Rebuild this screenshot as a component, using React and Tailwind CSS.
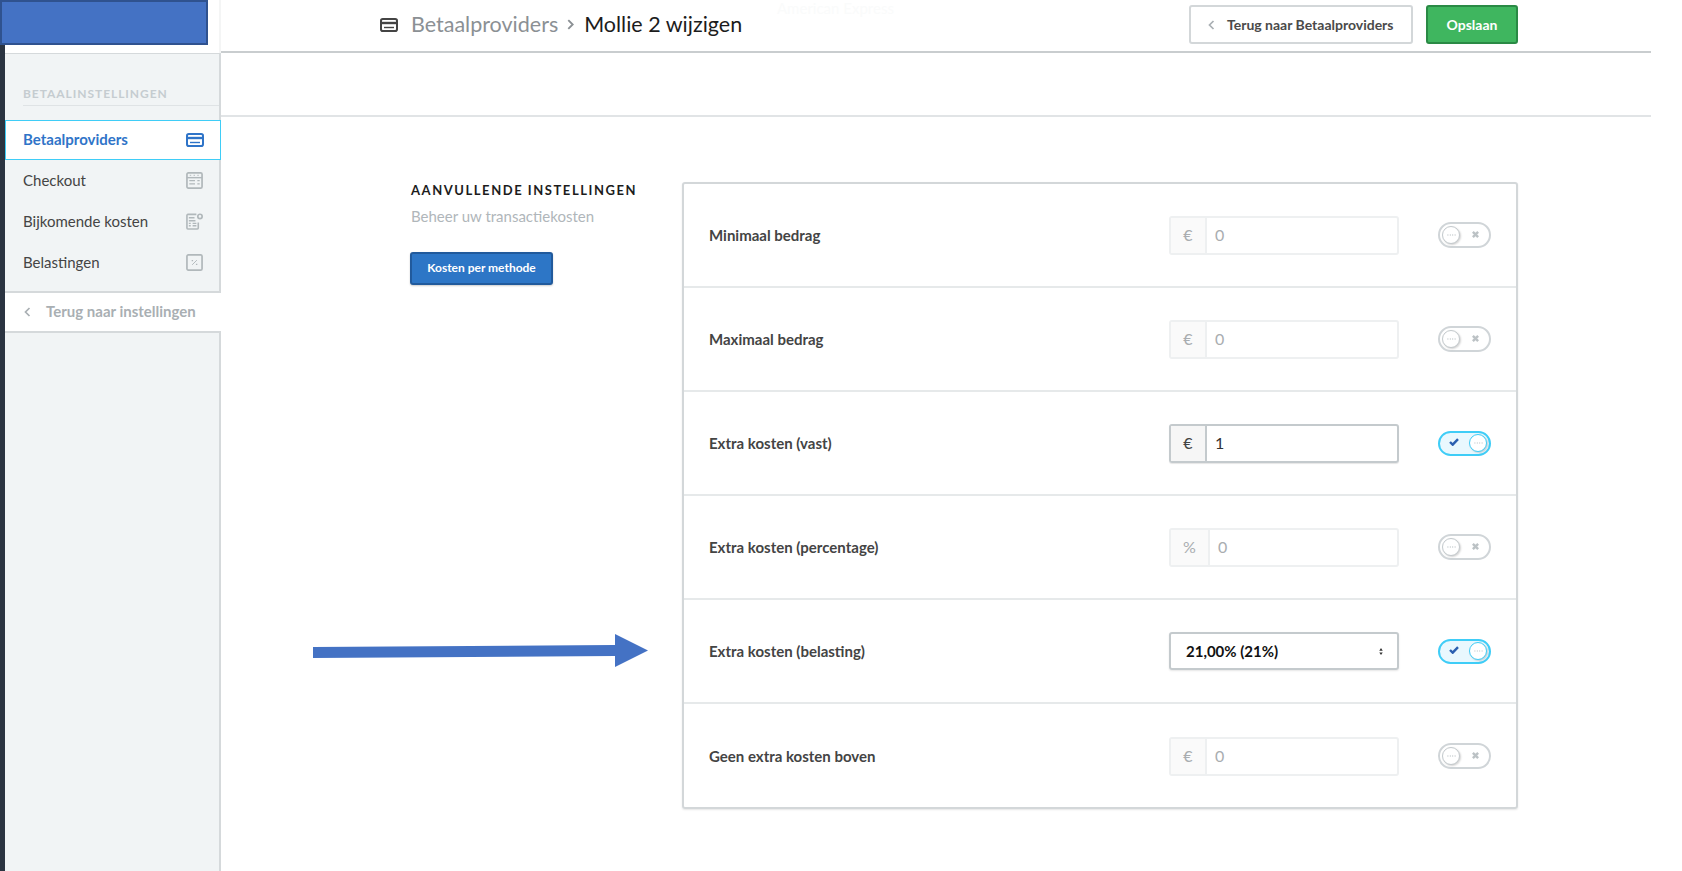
import React from "react";

const CardIcon = ({ className }) => (
  <svg viewBox="0 0 18 14" className={className} fill="none" stroke="currentColor">
    <rect x="1" y="1" width="16" height="12" rx="1.8" strokeWidth="2" />
    <path d="M1 5h16" strokeWidth="2.4" />
    <path d="M4 9.5h10" strokeWidth="1.4" />
  </svg>
);

const CheckoutIcon = () => (
  <svg viewBox="0 0 18 18" className="h-[17px] w-[17px] text-[#b1b8bb]" fill="none" stroke="currentColor">
    <rect x="1" y="1" width="16" height="16" rx="1.5" strokeWidth="1.8" />
    <path d="M1 6h16" strokeWidth="1.5" />
    <path d="M4 3.5h1.5M8 3.5h1.5M12 3.5h1.5" strokeWidth="1" />
    <path d="M3.5 9.2h6M3.5 12.5h6M12 9.2h2.5M12 12.5h2.5" strokeWidth="1.4" />
  </svg>
);

const CostsIcon = () => (
  <svg viewBox="0 0 18 18" className="h-[17px] w-[17px] text-[#b1b8bb]" fill="none" stroke="currentColor">
    <path d="M11 1.5H2a1 1 0 0 0-1 1V16a1 1 0 0 0 1 1h10a1 1 0 0 0 1-1v-6" strokeWidth="1.7" />
    <circle cx="14.8" cy="3.6" r="2.3" strokeWidth="1.8" />
    <path d="M3 5h6M3 8.2h7M3 11h2M3 13.5h2M7 11h4M7 13.5h4" strokeWidth="1.4" />
  </svg>
);

const PercentIcon = () => (
  <svg viewBox="0 0 18 18" className="h-[17px] w-[17px] text-[#b1b8bb]" fill="none" stroke="currentColor">
    <rect x="1" y="1" width="16" height="16" rx="1.5" strokeWidth="1.8" />
    <path d="M6.5 11.5l5-5" strokeWidth="1" />
    <path d="M6 7h1.5M10.5 11h1.5" strokeWidth="1.4" />
  </svg>
);

const Chevron = ({ className, d = "M5 1L1 5l4 4" }) => (
  <svg viewBox="0 0 6 10" className={className} fill="none" stroke="currentColor" strokeWidth="1.7">
    <path d={d} />
  </svg>
);

const Knob = ({ on }) => (
  <span
    className={
      "flex h-[18px] w-[18px] shrink-0 items-center justify-center rounded-full border bg-white shadow-[1px_1px_2px_rgba(0,0,0,0.18)] " +
      (on ? "border-[#3fcdf7] text-[#c9ced1]" : "border-[#c3c9cc] text-[#c3c9cc]")
    }
  >
    <svg viewBox="0 0 10 2" className="h-[2px] w-[9px]" fill="currentColor">
      <circle cx="1" cy="1" r="0.7" />
      <circle cx="3.7" cy="1" r="0.7" />
      <circle cx="6.3" cy="1" r="0.7" />
      <circle cx="9" cy="1" r="0.7" />
    </svg>
  </span>
);

const Toggle = ({ on }) =>
  on ? (
    <div className="flex h-[25px] w-[53px] items-center justify-between rounded-full border-2 border-[#3fcdf7] bg-[#e9f8fe] pl-[9px] pr-[2px]">
      <svg viewBox="0 0 10 8" className="mb-[2px] h-[8px] w-[10px] text-[#2b5fb0]" fill="none" stroke="currentColor" strokeWidth="2.4">
        <path d="M1 4l2.7 2.7L9 1.2" />
      </svg>
      <Knob on />
    </div>
  ) : (
    <div className="flex h-[26px] w-[53px] items-center justify-between rounded-full border-2 border-[#d0d5d8] bg-white pl-[2px] pr-[10px]">
      <Knob />
      <svg viewBox="0 0 8 8" className="mb-[1px] h-[7px] w-[7px] text-[#bcc2c5]" fill="none" stroke="currentColor" strokeWidth="2.8">
        <path d="M1 1l6 6M7 1L1 7" />
      </svg>
    </div>
  );

const Field = ({ addon, addonW, value, on }) => (
  <div
    className={
      "flex h-[39px] w-[230px] overflow-hidden rounded-[3px] border-2 " +
      (on ? "border-[#c4cacd] shadow-[0_1px_1px_rgba(0,0,0,0.1)]" : "border-[#eef0f1]")
    }
  >
    <div
      className={
        "flex shrink-0 items-center justify-center border-r-2 text-[16px] " +
        addonW +
        (on ? " border-[#c4cacd] bg-[#f6f6f6] text-[#444]" : " border-[#eef0f1] bg-[#fafafa] text-[#a9adb0]")
      }
    >
      {addon}
    </div>
    <div className={"flex flex-1 items-center pl-[8px] text-[16px] " + (on ? "text-[#333]" : "text-[#a9adb0]")}>{value}</div>
  </div>
);

const Select = () => (
  <div className="flex h-[38px] w-[230px] items-center justify-between rounded-[3px] border-2 border-[#c4cacd] pl-[15px] pr-[14px] text-[15px] font-bold text-[#111] shadow-[0_1px_2px_rgba(0,0,0,0.1)]">
    <span>21,00% (21%)</span>
    <svg viewBox="0 0 4 8" className="h-[7px] w-[4px] text-[#333]" fill="currentColor">
      <path d="M2 0l2 3H0zM2 8L0 5h4z" />
    </svg>
  </div>
);

const Row = ({ label, children, on, last }) => (
  <div className={"flex h-[104px] items-center pl-[25px] pr-[25px] " + (last ? "" : "border-b-2 border-[#e6e9ea]")}>
    <div className="flex-1 pt-[1px] text-[15px] font-bold text-[#444]">{label}</div>
    {children}
    <div className="ml-[39px]">
      <Toggle on={on} />
    </div>
  </div>
);

const NavItem = ({ label, icon }) => (
  <div className="flex h-[41px] items-center justify-between pl-[18px] pr-[16px] text-[15px] text-[#444]">
    <span>{label}</span>
    {icon}
  </div>
);

export default function App() {
  return (
    <div className="relative flex h-[871px] w-[1682px] overflow-hidden bg-white font-['Lato','Liberation_Sans',sans-serif]">
      {/* annotation: blue box over the logo */}
      <div className="absolute left-0 top-0 h-[45px] w-[208px] border-2 border-[#2f528f] bg-[#4472c4]" />
      {/* annotation: arrow */}
      <svg viewBox="0 0 335 33" className="absolute left-[313px] top-[634px] h-[33px] w-[335px]">
        <path d="M0 13L302 11V0L335 16.5 302 33V22L0 24Z" fill="#4472c4" />
      </svg>
      {/* faint text bleeding through the screenshot */}
      <div className="absolute left-[777px] top-[-3px] text-[15px] text-[#fafbfb]">American Express</div>

      <div className="w-[5px] shrink-0 bg-[#2b3441]" />

      <aside className="flex w-[216px] shrink-0 flex-col">
        <div className="h-[53px] shrink-0 border-r-2 border-[#f4f5f5] bg-white" />
        <div className="h-[240px] shrink-0 border-r-2 border-b-2 border-t border-[#d5d9db] bg-[#f1f4f5]">
          <div className="ml-[18px] mt-[30px] flex h-[22px] items-center border-b border-[#dfe3e5] pb-[2px] text-[12px] font-bold tracking-[0.95px] text-[#c5ccd0]">
            BETAALINSTELLINGEN
          </div>
          <div className="mr-[-2px] mt-[14px] flex h-[40px] items-center justify-between border border-[#3fcdf7] bg-white pb-[1px] pl-[17px] pr-[16px] text-[15px] font-bold text-[#2f74c8]">
            <span>Betaalproviders</span>
            <CardIcon className="h-[14px] w-[18px] text-[#2f74c8]" />
          </div>
          <NavItem label="Checkout" icon={<CheckoutIcon />} />
          <NavItem label="Bijkomende kosten" icon={<CostsIcon />} />
          <NavItem label="Belastingen" icon={<PercentIcon />} />
        </div>
        <div className="flex h-[38px] shrink-0 items-center bg-white pb-[1px] pl-[19px] text-[15px] font-bold text-[#a9afb3]">
          <Chevron className="mr-[15px] h-[10px] w-[7px]" />
          Terug naar instellingen
        </div>
        <div className="flex-1 border-r-2 border-t-2 border-[#d5d9db] bg-[#f1f4f5]" />
      </aside>

      <main className="flex w-[1430px] shrink-0 flex-col">
        <header className="flex h-[53px] shrink-0 items-center border-b-2 border-[#c9cdcf] pb-[2px] pl-[159px] pr-[133px]">
          <CardIcon className="h-[14px] w-[18px] text-[#444]" />
          <span className="ml-[13px] text-[21.5px] text-[#8b9094]">Betaalproviders</span>
          <Chevron className="ml-[9px] h-[11px] w-[7px] text-[#8b9094]" d="M1 1l4 4-4 4" />
          <span className="ml-[10px] text-[21.5px] text-[#1c1c1c]">Mollie 2 wijzigen</span>
          <div className="ml-auto flex items-center gap-[13px]">
            <div className="flex h-[39px] w-[224px] items-center rounded-[3px] border-2 border-[#d3d7d9] pl-[17px] text-[14px] font-bold text-[#4a4a4a]">
              <Chevron className="mr-[12px] h-[10px] w-[7px] text-[#a9afb3]" />
              Terug naar Betaalproviders
            </div>
            <div className="flex h-[39px] w-[92px] items-center justify-center rounded-[3px] border-2 border-[#2a8a45] bg-[#3fb65f] text-[14px] font-bold text-white">
              Opslaan
            </div>
          </div>
        </header>
        <div className="h-[64px] shrink-0 border-b-2 border-[#e1e4e6]" />
        <div className="flex pl-[189px] pt-[65px]">
          <div className="w-[272px] shrink-0 pl-[1px]">
            <div className="text-[13px] font-bold leading-[16px] tracking-[1.55px] text-[#1c1c1c]">AANVULLENDE INSTELLINGEN</div>
            <div className="mt-[8px] text-[15px] leading-[20px] text-[#b0b6ba]">Beheer uw transactiekosten</div>
            <div className="ml-[-1px] mt-[26px] flex h-[33px] w-[143px] items-center justify-center rounded-[3px] border-2 border-[#215a9c] bg-[#2d76c6] pb-[2px] text-[12px] font-bold text-white shadow-[0_1px_2px_rgba(0,0,0,0.2)]">
              Kosten per methode
            </div>
          </div>
          <div className="h-[627px] w-[836px] shrink-0 rounded-[3px] border-2 border-[#d3d7d9] shadow-[0_1px_2px_rgba(0,0,0,0.1)]">
            <Row label="Minimaal bedrag">
              <Field addon="€" addonW="w-[36px]" value="0" />
            </Row>
            <Row label="Maximaal bedrag">
              <Field addon="€" addonW="w-[36px]" value="0" />
            </Row>
            <Row label="Extra kosten (vast)" on>
              <Field addon="€" addonW="w-[36px]" value="1" on />
            </Row>
            <Row label="Extra kosten (percentage)">
              <Field addon="%" addonW="w-[39px]" value="0" />
            </Row>
            <Row label="Extra kosten (belasting)" on>
              <Select />
            </Row>
            <Row label="Geen extra kosten boven" last>
              <Field addon="€" addonW="w-[36px]" value="0" />
            </Row>
          </div>
        </div>
      </main>
    </div>
  );
}
